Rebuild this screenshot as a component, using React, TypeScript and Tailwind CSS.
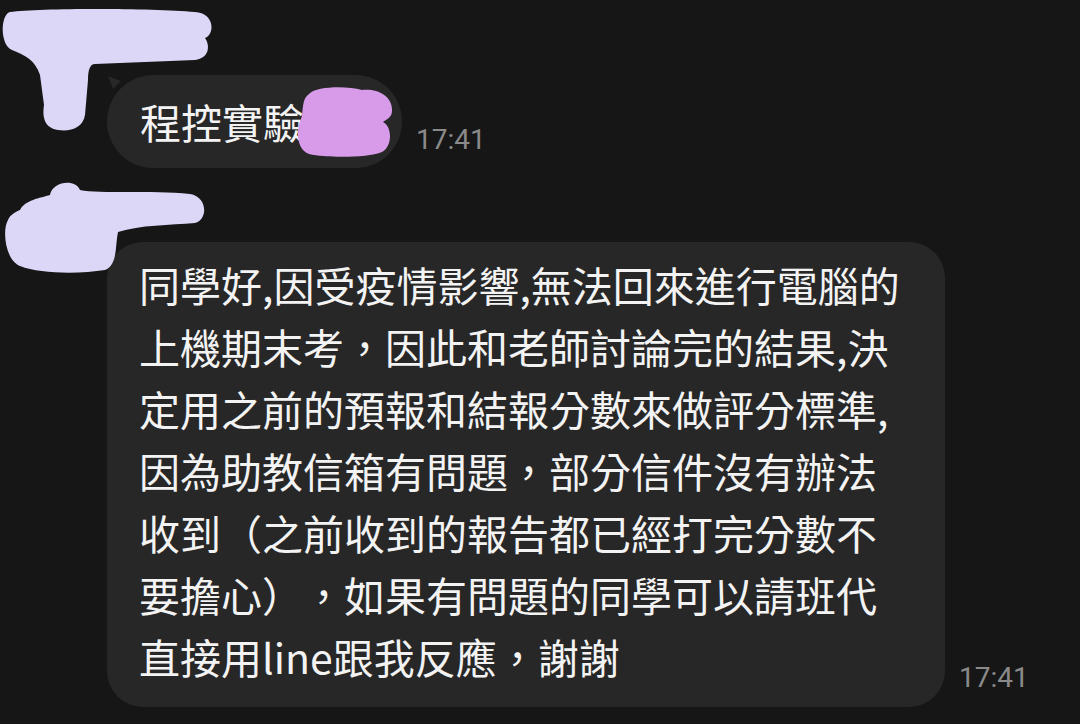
export default function App() {
  const lines = [
    '同學好,因受疫情影響,無法回來進行電腦的',
    '上機期末考，因此和老師討論完的結果,決',
    '定用之前的預報和結報分數來做評分標準,',
    '因為助教信箱有問題，部分信件沒有辦法',
    '收到（之前收到的報告都已經打完分數不',
    '要擔心），如果有問題的同學可以請班代',
    '直接用line跟我反應，謝謝',
  ]

  return (
    <div className="relative h-[724px] w-[1080px] overflow-hidden bg-[#161616] font-['Noto_Sans_CJK_TC','Noto_Sans',sans-serif] text-[#f3f3f3] [text-spacing-trim:space-all]">
      {/* Messages */}
      <div className="flex flex-col pl-[107px] pt-[75px]">
        <div className="flex items-end gap-[14px]">
          <div className="relative flex h-[93px] items-center rounded-full bg-[#272727] pl-[33px] pr-[9px]">
            <svg className="absolute left-0 top-0" width="16" height="16" viewBox="0 0 16 16">
              <path d="M1 1 L14 6 L6 14 Z" fill="#272727" />
            </svg>
            <span className="text-[41px] leading-none">程控實驗</span>
            <svg className="-ml-[7px]" width="96" height="72" viewBox="0 0 96 72">
              <path
                d="M12 8 C20 0 50 0 65 4 C80 2 96 10 95 25 C95 32 88 34 86 36 C95 40 96 60 85 66 C70 72 30 72 12 68 C0 64 -2 45 5 30 C6 20 6 12 12 8 Z"
                fill="#d89be9"
              />
            </svg>
          </div>
          <span className="mb-[14px] font-['Roboto',sans-serif] text-[28px] leading-none text-[#8a8a8a]">17:41</span>
        </div>

        <div className="mt-[74px] flex items-end gap-[14px]">
          <div className="h-[465px] w-[838px] rounded-[36px] bg-[#272727] pl-[32px] pt-[11px]">
            {lines.map((l) => (
              <p key={l} className="whitespace-nowrap text-[41px] leading-[62px]">
                {l}
              </p>
            ))}
          </div>
          <span className="mb-[15px] font-['Roboto',sans-serif] text-[28px] leading-none text-[#8a8a8a]">17:41</span>
        </div>
      </div>

      {/* Redaction scribbles over avatar / name */}
      <svg className="absolute left-0 top-0" width="220" height="140" viewBox="0 0 220 140">
        <path
          d="M10 12 C40 8 150 8 195 12 C215 13 215 35 205 38 C210 45 210 58 195 60 L95 64 C90 64 88 70 88 80 L85 115 C83 128 70 132 58 130 C45 128 42 118 44 105 L40 75 C35 60 25 55 12 50 C0 45 0 15 10 12 Z"
          fill="#dcd6f7"
        />
      </svg>
      <svg className="absolute left-0 top-[170px]" width="220" height="110" viewBox="0 0 220 110">
        <path
          d="M20 40 C25 30 40 28 50 25 C52 12 75 8 80 20 C100 24 150 20 190 24 C208 27 208 50 195 53 C170 55 140 55 118 62 C115 75 118 95 105 100 C80 104 40 104 20 96 C5 90 2 60 8 50 C10 45 15 42 20 40 Z"
          fill="#dcd6f7"
        />
      </svg>
    </div>
  )
}
